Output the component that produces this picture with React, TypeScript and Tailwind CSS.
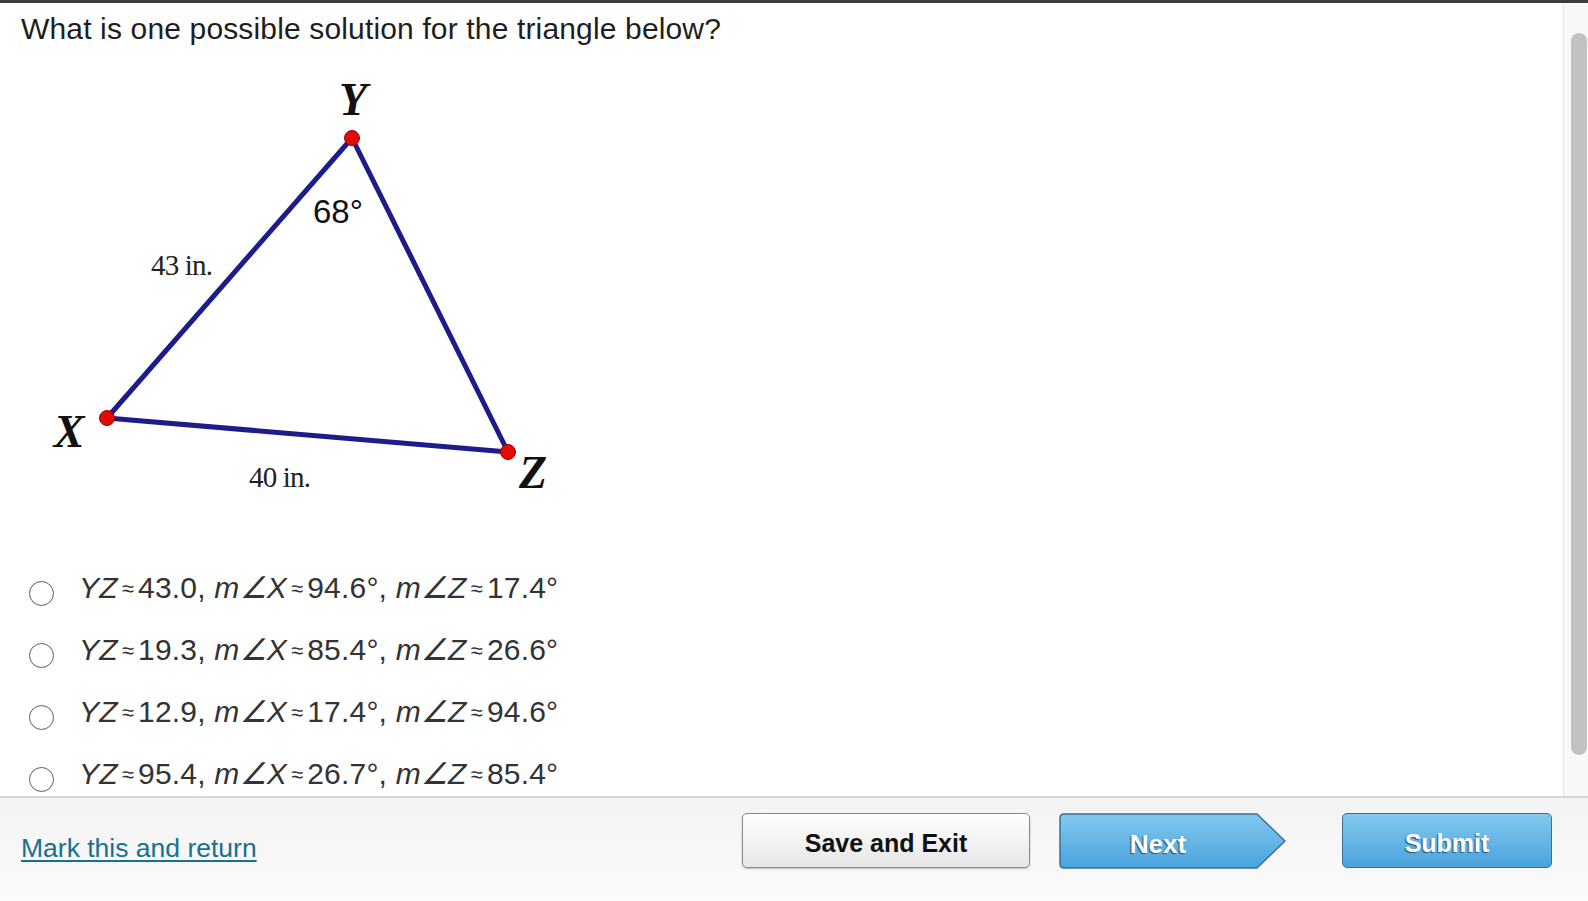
const answers = [
  { yz: "43.0", x: "94.6", z: "17.4" },
  { yz: "19.3", x: "85.4", z: "26.6" },
  { yz: "12.9", x: "17.4", z: "94.6" },
  { yz: "95.4", x: "26.7", z: "85.4" },
];

function Approx() {
  return <span className="mx-[4px] text-[22px] align-[2px]">≈</span>;
}

function Triangle() {
  const serif = "'Liberation Serif', 'Times New Roman', serif";
  return (
    <svg width="600" height="440" viewBox="0 0 600 440" className="block">
      <polygon
        points="352,68 107,348 508,382"
        fill="none"
        stroke="#1c1c8a"
        strokeWidth="5"
        strokeLinejoin="round"
      />
      {[
        [352, 68],
        [107, 348],
        [508, 382],
      ].map(([cx, cy]) => (
        <circle key={cx} cx={cx} cy={cy} r="7.5" fill="#e30a0a" stroke="#9a0000" strokeWidth="1" />
      ))}
      <text x="353" y="45" textAnchor="middle" fontFamily={serif} fontWeight="bold" fontStyle="italic" fontSize="46" fill="#111">Y</text>
      <text x="69" y="377" textAnchor="middle" fontFamily={serif} fontWeight="bold" fontStyle="italic" fontSize="46" fill="#111">X</text>
      <text x="533" y="418" textAnchor="middle" fontFamily={serif} fontWeight="bold" fontStyle="italic" fontSize="46" fill="#111">Z</text>
      <text x="313" y="153" fontFamily="'Liberation Sans', Arial, sans-serif" fontSize="33" fill="#111">68°</text>
      <text x="151" y="205" fontFamily={serif} fontSize="29" fill="#222" letterSpacing="-0.8">43 in.</text>
      <text x="249" y="417" fontFamily={serif} fontSize="29" fill="#222" letterSpacing="-0.8">40 in.</text>
    </svg>
  );
}

export default function App() {
  return (
    <div className="w-[1588px] h-[901px] flex flex-col overflow-hidden bg-white font-['Liberation_Sans',Arial,sans-serif] text-[#222]">
      <div className="h-[3px] bg-[#3d3d3d] shrink-0" />
      <div className="flex-1 flex min-h-0">
        <div className="flex-1 overflow-hidden pl-[21px] pt-[9px]">
          <h1 className="text-[30px] leading-[34px] tracking-[0.15px] font-normal text-[#1e1e1e]">
            What is one possible solution for the triangle below?
          </h1>
          <div className="mt-[24px] -ml-[21px]">
            <Triangle />
          </div>
          <div className="mt-[62px] -ml-[21px]">
            {answers.map((a) => (
              <div key={a.yz} className="flex items-start h-[62px]">
                <div className="mt-[9px] ml-[29px] w-[25px] h-[25px] rounded-full border-[1.5px] border-[#5c5c5c] bg-white shrink-0" />
                <div className="ml-[25px] text-[30px] leading-[32px] text-[#333] whitespace-nowrap tracking-[0.2px]">
                  <span className="italic">YZ</span>
                  <Approx />
                  {a.yz}, <span className="italic">m∠X</span>
                  <Approx />
                  {a.x}°, <span className="italic">m∠Z</span>
                  <Approx />
                  {a.z}°
                </div>
              </div>
            ))}
          </div>
        </div>
        <div className="w-[25px] shrink-0 bg-[#f8f8f8] border-l border-[#e4e4e4] pt-[30px]">
          <div className="ml-[7px] w-[16px] h-[722px] rounded-full bg-[#c2c2c2]" />
        </div>
      </div>
      <div className="h-[105px] shrink-0 border-t-2 border-[#d6d6d6] bg-gradient-to-b from-[#f3f3f3] to-[#fbfbfb] flex items-start">
        <a href="#" className="ml-[21px] mt-[34px] text-[26.5px] leading-[32px] text-[#17708f] underline underline-offset-[3px] decoration-[1.5px]">
          Mark this and return
        </a>
        <div className="ml-auto mr-[36px] mt-[15px] flex items-start">
          <button className="w-[288px] h-[55px] pt-[7px] rounded-[5px] border-[1.5px] border-[#8a8a8a] bg-gradient-to-b from-white to-[#e6e6e6] shadow-[0_1px_2px_rgba(0,0,0,0.25)] text-[25px] font-bold text-[#111]">
            Save and Exit
          </button>
          <button className="relative ml-[29px] w-[228px] h-[56px] pt-[7px] text-[26px] font-bold text-white [text-shadow:-1px_1px_1px_#25557a]">
            <svg className="absolute inset-0" width="228" height="56" viewBox="0 0 228 56">
              <defs>
                <linearGradient id="nextGrad" x1="0" y1="0" x2="0" y2="1">
                  <stop offset="0" stopColor="#82c8ef" />
                  <stop offset="1" stopColor="#4aa3dc" />
                </linearGradient>
              </defs>
              <path
                d="M5 1 H198 L226 28 L198 55 H5 Q1 55 1 51 V5 Q1 1 5 1 Z"
                fill="url(#nextGrad)"
                stroke="#3b6f98"
                strokeWidth="1.5"
                strokeLinejoin="round"
              />
            </svg>
            <span className="relative pr-[30px]">Next</span>
          </button>
          <button className="ml-[55px] w-[210px] h-[55px] pt-[7px] rounded-[5px] border-[1.5px] border-[#3b6f98] bg-gradient-to-b from-[#82c8ef] to-[#4aa3dc] text-[25px] font-bold text-white [text-shadow:-1px_1px_1px_#25557a]">
            Submit
          </button>
        </div>
      </div>
    </div>
  );
}
